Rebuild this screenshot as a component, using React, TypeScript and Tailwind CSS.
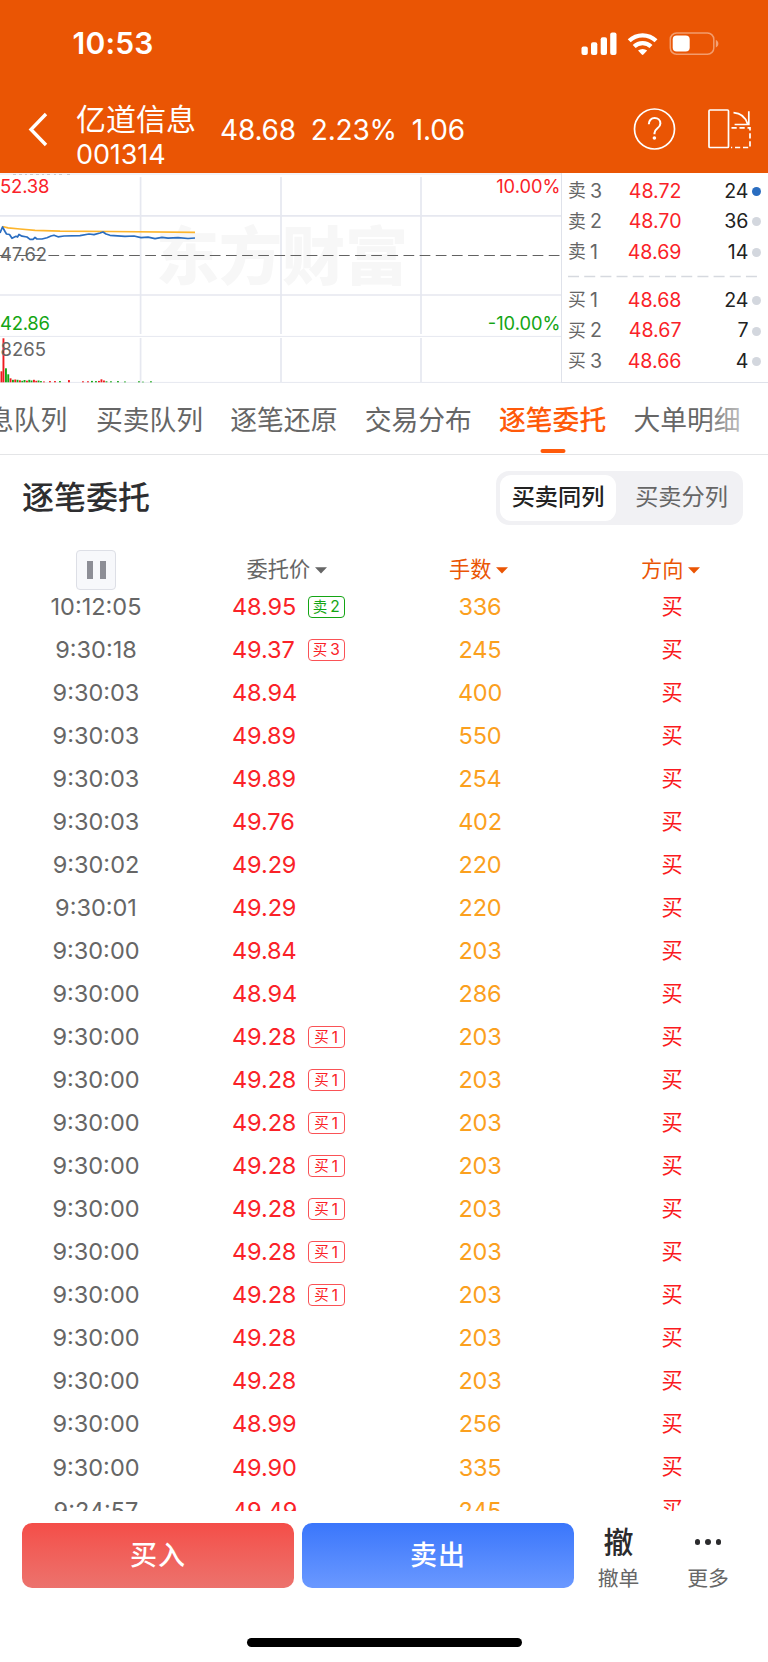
import React from "react";

type Row = { t: string; p: string; q: string; tag?: string };

const rows: Row[] = [
  { t: "10:12:05", p: "48.95", q: "336", tag: "卖2" },
  { t: "9:30:18", p: "49.37", q: "245", tag: "买3" },
  { t: "9:30:03", p: "48.94", q: "400" },
  { t: "9:30:03", p: "49.89", q: "550" },
  { t: "9:30:03", p: "49.89", q: "254" },
  { t: "9:30:03", p: "49.76", q: "402" },
  { t: "9:30:02", p: "49.29", q: "220" },
  { t: "9:30:01", p: "49.29", q: "220" },
  { t: "9:30:00", p: "49.84", q: "203" },
  { t: "9:30:00", p: "48.94", q: "286" },
  ...Array.from({ length: 7 }, () => ({ t: "9:30:00", p: "49.28", q: "203", tag: "买1" })),
  { t: "9:30:00", p: "49.28", q: "203" },
  { t: "9:30:00", p: "49.28", q: "203" },
  { t: "9:30:00", p: "48.99", q: "256" },
  { t: "9:30:00", p: "49.90", q: "335" },
  { t: "9:24:57", p: "49.49", q: "245" },
];

const asks = [
  ["卖", "3", "48.72", "24"],
  ["卖", "2", "48.70", "36"],
  ["卖", "1", "48.69", "14"],
];
const bids = [
  ["买", "1", "48.68", "24"],
  ["买", "2", "48.67", "7"],
  ["买", "3", "48.66", "4"],
];

// [x, height, rising]
const volumes: [number, number, boolean][] = [
  [0.5, 11, true], [2.5, 44, true], [5, 14, false], [7.3, 8, false], [9.6, 4, true],
  [12, 2.5, false], [14.3, 2.8, true], [16.6, 2.5, false], [19, 2, true], [21.3, 1.5, false], [23.6, 2.3, false],
  [26, 1.6, true], [28.3, 2.5, false], [30.6, 1.8, false], [33, 2.5, true], [35.3, 1.5, true], [37.6, 1.8, false],
  [40, 1.2, false], [43, 0.8, true], [49, 1.2, true], [54, 1.2, true], [59, 1.2, false], [68, 2.2, true],
  [82, 1, true], [87, 1, true], [91, 1.4, false], [95, 1.2, false], [98, 1.4, true], [100.5, 3, true],
  [103, 1.8, true], [105.5, 1, false], [110, 1, false], [117, 1.2, false], [124, 0.8, false],
  [138, 1, false], [142, 0.6, false], [150, 1, false],
];

function StatusBar() {
  return (
    <div className="flex h-[87px] items-center justify-between pl-[72.5px] pr-[49px]">
      <span className="text-[30px] font-semibold tracking-[0.2px]">10:53</span>
      <svg width="138" height="26" viewBox="0 0 138 26" fill="#fff">
        <rect x="0.5" y="15.5" width="6.3" height="8.5" rx="2" />
        <rect x="10" y="11.3" width="6.3" height="12.7" rx="2" />
        <rect x="19.7" y="6.3" width="6.3" height="17.7" rx="2" />
        <rect x="29.2" y="1.5" width="6.3" height="22.5" rx="2" />
        <g fill="none" stroke="#fff" strokeWidth="4.2">
          <path d="M48.2 9.8a19.2 19.2 0 0 1 26.8 0" />
          <path d="M53.2 15.6a12 12 0 0 1 16.8 0" />
        </g>
        <path d="M57 19.6a7 7 0 0 1 9.2 0l-3.8 4a1.1 1.1 0 0 1-1.6 0z" />
        <rect x="89.3" y="2" width="43.5" height="21.2" rx="6.3" fill="none" stroke="#fff" strokeOpacity=".42" strokeWidth="1.5" />
        <rect x="91.7" y="4.6" width="17" height="16" rx="4" />
        <path d="M134.8 9v7.4c3.4-1.2 3.4-6.2 0-7.4z" fillOpacity=".45" />
      </svg>
    </div>
  );
}

function Header() {
  return (
    <header className="h-[173px] shrink-0 bg-[#ea5504] text-white">
      <StatusBar />
      <div className="flex h-[86px] items-center pl-[28px] pr-[16px]">
        <svg width="20" height="36" viewBox="0 0 20 36" className="mt-[-1px] shrink-0" fill="none" stroke="#fff" strokeWidth="3.4">
          <path d="M18 2 3 17.5 18 33" />
        </svg>
        <div className="ml-[28px] flex w-[120px] flex-col pt-[11px]">
          <span className="h-[38px] text-[30px] leading-[32px] whitespace-nowrap">亿道信息</span>
          <span className="text-[27px] leading-[28px] tracking-[-0.1px]">001314</span>
        </div>
        <div className="ml-[24px] flex gap-[15px] text-[28px] leading-[36px] tracking-[-0.2px]">
          <span>48.68</span>
          <span>2.23%</span>
          <span>1.06</span>
        </div>
        <svg className="mt-[-3px] ml-auto shrink-0" width="120" height="44" viewBox="0 0 120 44" fill="none" stroke="#fff" strokeWidth="1.7">
          <circle cx="22.5" cy="22" r="20" />
          <path d="M16.8 17.3c0-3.8 2.5-6.2 5.8-6.2s5.8 2.2 5.8 5.4c0 5-5.9 4.6-5.9 9.600v1.2" strokeWidth="2" />
          <circle cx="22.4" cy="31" r="1.8" fill="#fff" stroke="none" />
          <rect x="77" y="3" width="19.5" height="37.5" rx="1" />
          <path d="M101.5 5.600c7 .4 12 4.800 14 11.200M116.800 4.300v13.200h-14.200" />
          <path d="M99.500 20.800h18.500v19.700h-19" strokeDasharray="5.2 2.8" strokeWidth="1.7" />
        </svg>
      </div>
    </header>
  );
}

function Chart() {
  return (
    <svg width="561" height="210" viewBox="0 173 561 210" className="shrink-0">
      <g fontFamily="'Noto Sans CJK SC', sans-serif" fontWeight="900" fontSize="63" fill="#f7f7f7">
        <text x="156" y="279">东方财富</text>
      </g>
      <path d="M13 174.500h3m3 0h3m3 0h2m3 0h3m3 0h3m3 0h2m3 0h3m4 0h2m3 0h3m5 0h3" stroke="#aaa" />
      <g stroke="#e6e8f0" fill="none">
        <path d="M0 174h561M0 336.400h561M0 382.400h561" strokeWidth="1" />
        <path d="M0 215.800h561M0 295h561M140.600 177v157M140.600 338v44M281 177v157M281 338v44M421 177v157M421 338v44" strokeWidth="1.7" />
      </g>
      <path d="M0 255.500h561" stroke="#626262" strokeWidth="1.2" strokeDasharray="10.7 5.44" />
      {volumes.map(([x, h, up]) => (
        <rect key={x} x={x} y={382.3 - h} width="1.9" height={h} fill={up ? "#f01a1e" : "#14a514"} />
      ))}
      <path d="M2.500 226.500 8 227.800 20 229 35 230.400 60 231.200 110 231.500 195 232.300" fill="none" stroke="#fdb52c" strokeWidth="1.7" />
      <path
        d="M0 233 2.500 227 5 231.500 6.500 234 9.500 234.500 12 238.300 16 236.300 17.500 237 19 234.500 22 236.200 27 237 30 239.300 33 239.300 35 237.500 37 239 42 239 47 237.700 51 236 54 235.200 58 236.800 64 236 80 235.600 89 234 94 234.600 100 233 103 232 106 234 110 235.300 125 236.300 134 236 141 237.600 148 237.200 155 238.700 162 237.300 168 238.200 178 237.700 188 238.500 195 238"
        fill="none" stroke="#2a6dc0" strokeWidth="1.7" strokeLinejoin="round"
      />
      <g fontFamily="Inter, sans-serif" fontSize="18.5">
        <text x="0" y="192.5" fill="#fa2228" textLength="49.5">52.38</text>
        <text x="0" y="261" fill="#666" textLength="47">47.62</text>
        <text x="0" y="329.7" fill="#14a514" textLength="50">42.86</text>
        <text x="0.5" y="355.7" fill="#666">8265</text>
        <text x="560.5" y="192.5" textAnchor="end" fill="#fa2228" fontSize="18.3">10.00%</text>
        <text x="560.5" y="329.7" textAnchor="end" fill="#14a514" fontSize="18.3">-10.00%</text>
      </g>
    </svg>
  );
}

function Quote({ q, hot }: { q: string[]; hot?: boolean }) {
  return (
    <div className="flex h-[30.6px] items-center text-[19.6px]">
      <span className="w-[22px] text-[17.8px] text-[#666]">{q[0]}</span>
      <span className="w-[16px] text-[#666]">{q[1]}</span>
      <span className="w-[75.5px] text-right text-[#fa2228]">{q[2]}</span>
      <span className="flex-1 text-right text-[#222]">{q[3]}</span>
      {hot ? (
        <i className="ml-[3.5px] size-[9px] rounded-full bg-[#2a6dc0]" />
      ) : (
        <i className="ml-[3.5px] size-[9px] rounded-full bg-[#d3d7de]" />
      )}
    </div>
  );
}

function OrderBook() {
  return (
    <div className="h-[210px] flex-1 border-b border-l border-[#dfe2ea] pt-[3px] pr-[7px] pl-[6px]">
      {asks.map((q, i) => (
        <Quote key={q[2]} q={q} hot={i === 0} />
      ))}
      <svg className="block" width="193" height="17.4" viewBox="0 0 193 17.4">
        <path d="M0 8.500h190" stroke="#d6d9df" strokeWidth="1.7" strokeDasharray="11 5.18" />
      </svg>
      {bids.map((q) => (
        <Quote key={q[2]} q={q} />
      ))}
    </div>
  );
}

function Tabs() {
  const tabs = ["买卖队列", "逐笔还原", "交易分布", "逐笔委托", "大单明细"];
  return (
    <nav className="relative flex h-[72px] shrink-0 overflow-hidden border-b border-[#e4e5e7] text-[26.8px] leading-[74px] whitespace-nowrap text-[#666]">
      <span className="-ml-[13px]">息队列</span>
      <div className="ml-[28.5px] flex gap-[27.2px]">
        {tabs.map((t) =>
          t === "逐笔委托" ? (
            <span key={t} className="relative font-medium text-[#ff5a0a]">
              {t}
              <i className="absolute bottom-[1px] left-1/2 h-[4px] w-[25px] -translate-x-1/2 rounded-full bg-[#ff5a0a]" />
            </span>
          ) : (
            <span key={t}>{t}</span>
          ),
        )}
      </div>
      <i className="absolute top-0 right-0 h-[70px] w-[66px] bg-linear-to-r from-transparent to-white" />
    </nav>
  );
}

function Caret() {
  return (
    <svg width="12" height="7" viewBox="0 0 12 7" className="mt-[2px] ml-[5px]" fill="currentColor">
      <path d="M0 .3h12L6 6.500z" />
    </svg>
  );
}

const cols = "grid grid-cols-[192px_192px_192px_192px]";

function Tag({ text }: { text: string }) {
  const tone = text[0] === "卖" ? "border-[#14a514] text-[#14a514]" : "border-[#fa5256] text-[#fa2228]";
  return (
    <span className={`ml-[12px] flex h-[22px] w-[36.5px] items-center justify-center gap-[3px] rounded-[4px] border pt-[1px] text-[15.5px] leading-none ${tone}`}>
      <span className="text-[14.5px]">{text[0]}</span>
      <span>{text[1]}</span>
    </span>
  );
}

export default function App() {
  return (
    <div className="flex h-[1662px] w-[768px] flex-col overflow-hidden bg-white font-[Inter,'Noto_Sans_CJK_SC',sans-serif]">
      <Header />
      <div className="flex h-[210px] w-[768px] shrink-0">
        <Chart />
        <OrderBook />
      </div>
      <Tabs />
      <div className="flex h-[86px] shrink-0 items-center justify-between pr-[25px] pl-[22px]">
        <h1 className="text-[32px] font-medium text-[#2e2e30]">逐笔委托</h1>
        <div className="-mt-[1px] flex h-[54px] w-[247px] rounded-[13px] bg-[#f1f1f4] p-[4px] text-[23.2px]">
          <span className="flex w-[116px] items-center justify-center rounded-[11px] bg-white font-medium text-[#222]">买卖同列</span>
          <span className="flex flex-1 items-center justify-center pl-[8px] text-[#666]">买卖分列</span>
        </div>
      </div>
      <div className={`${cols} h-[44px] shrink-0 items-center pt-[9px] text-[21.2px] text-[#666]`}>
        <div className="flex justify-center">
          <div className="flex size-[40px] items-center justify-center gap-[7px] rounded-[4px] border-[1.5px] border-[#dddfe6] bg-[#f7f8fb]">
            <i className="h-[18px] w-[6px] bg-[#8d8e96]" />
            <i className="h-[18px] w-[6px] bg-[#8d8e96]" />
          </div>
        </div>
        <div className="flex items-center pl-[54.5px]">委托价<Caret /></div>
        <div className="flex items-center pl-[65px] text-[#ea5504]">手数<Caret /></div>
        <div className="flex items-center pl-[65px] text-[#ea5504]">方向<Caret /></div>
      </div>
      <div className="h-[926px] shrink-0 overflow-hidden text-[23.5px]">
        {rows.map((r, i) => (
          <div key={i} className={`${cols} h-[43.04px] items-center`}>
            <span className="text-center text-[#666]">{r.t}</span>
            <span className="flex items-center pl-[40px] text-[#fa2228]">
              <span className="w-[64px] tracking-[-0.1px]">{r.p}</span>
              {r.tag && <Tag text={r.tag} />}
            </span>
            <span className="text-center tracking-[-0.2px] text-[#fba01e]">{r.q}</span>
            <span className="pl-[85.5px] text-[21.2px] text-[#fa1a20]">买</span>
          </div>
        ))}
      </div>
      <div className="flex flex-1 flex-col items-center">
        <div className="flex w-full items-start pt-[12px] pl-[22px]">
          <div className="flex h-[65px] w-[272px] items-center justify-center rounded-[10px] bg-linear-to-b from-[#f44d48] to-[#ec726d] pt-[2px] text-[27px] font-medium tracking-[1px] text-white">买入</div>
          <div className="ml-[8px] flex h-[65px] w-[272px] items-center justify-center rounded-[10px] bg-linear-to-b from-[#3a76fb] to-[#6a98ff] pt-[2px] text-[27px] font-medium tracking-[1px] text-white">卖出</div>
          <div className="flex w-[89px] flex-col items-center text-[#2b2b2d]">
            <span className="h-[38px] text-[30px] leading-[38px] font-medium">撤</span>
            <span className="text-[20.8px] leading-[36px] text-[#666]">撤单</span>
          </div>
          <div className="flex w-[90px] flex-col items-center">
            <div className="flex h-[38px] items-center gap-[5px]">
              <i className="size-[5.5px] rounded-full bg-[#2b2b2d]" />
              <i className="size-[5.5px] rounded-full bg-[#2b2b2d]" />
              <i className="size-[5.5px] rounded-full bg-[#2b2b2d]" />
            </div>
            <span className="text-[20.8px] leading-[36px] text-[#666]">更多</span>
          </div>
        </div>
        <div className="mt-auto mb-[15px] h-[9px] w-[275px] rounded-full bg-black" />
      </div>
    </div>
  );
}
